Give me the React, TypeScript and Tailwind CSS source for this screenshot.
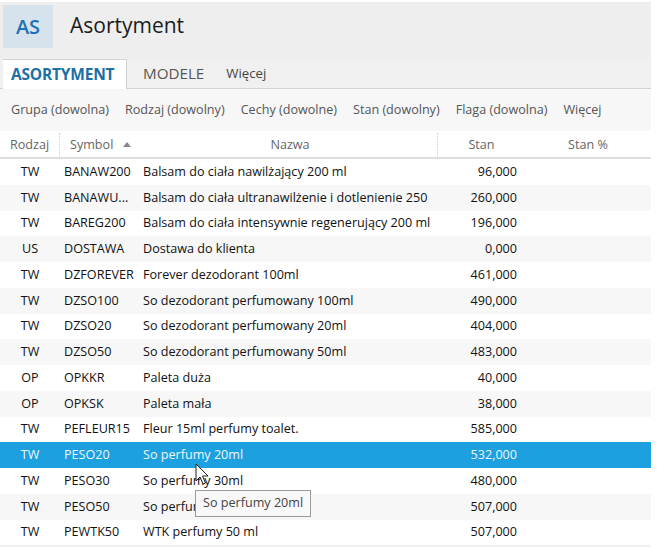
import React from "react";

type Row = { kind: string; symbol: string; name: string; stock: string };

const rows: Row[] = [
  { kind: "TW", symbol: "BANAW200", name: "Balsam do ciała nawilżający 200 ml", stock: "96,000" },
  { kind: "TW", symbol: "BANAWU...", name: "Balsam do ciała ultranawilżenie i dotlenienie 250", stock: "260,000" },
  { kind: "TW", symbol: "BAREG200", name: "Balsam do ciała intensywnie regenerujący 200 ml", stock: "196,000" },
  { kind: "US", symbol: "DOSTAWA", name: "Dostawa do klienta", stock: "0,000" },
  { kind: "TW", symbol: "DZFOREVER", name: "Forever dezodorant 100ml", stock: "461,000" },
  { kind: "TW", symbol: "DZSO100", name: "So dezodorant perfumowany 100ml", stock: "490,000" },
  { kind: "TW", symbol: "DZSO20", name: "So dezodorant perfumowany 20ml", stock: "404,000" },
  { kind: "TW", symbol: "DZSO50", name: "So dezodorant perfumowany 50ml", stock: "483,000" },
  { kind: "OP", symbol: "OPKKR", name: "Paleta duża", stock: "40,000" },
  { kind: "OP", symbol: "OPKSK", name: "Paleta mała", stock: "38,000" },
  { kind: "TW", symbol: "PEFLEUR15", name: "Fleur 15ml perfumy toalet.", stock: "585,000" },
  { kind: "TW", symbol: "PESO20", name: "So perfumy 20ml", stock: "532,000" },
  { kind: "TW", symbol: "PESO30", name: "So perfumy 30ml", stock: "480,000" },
  { kind: "TW", symbol: "PESO50", name: "So perfumy 50ml", stock: "507,000" },
  { kind: "TW", symbol: "PEWTK50", name: "WTK perfumy 50 ml", stock: "507,000" },
];

const filters = ["Grupa (dowolna)", "Rodzaj (dowolny)", "Cechy (dowolne)", "Stan (dowolny)", "Flaga (dowolna)", "Więcej"];

const SELECTED = 11;

function Cursor() {
  return (
    <svg width="16" height="24" viewBox="0 0 16 24" className="absolute left-[195px] top-[332px]">
      <path d="M1 1 L1 18 L5 14 L8 21 L10.5 20 L7.5 13 L13 13 Z" fill="#fff" stroke="#222" strokeWidth="1" strokeLinejoin="round" />
    </svg>
  );
}

export default function App() {
  return (
    <div className="h-[552px] w-[672px] overflow-hidden bg-white pt-[2px] text-[#222] font-['Open_Sans',sans-serif]">
      <div className="w-[651px]">
        <div className="flex h-[56px] items-start bg-[#eeeeee]">
          <div className="ml-[3px] mt-[3px] flex h-[43px] w-[50px] items-center justify-center bg-[#d7e3ec] text-[20px] font-semibold text-[#1d70b3]">
            AS
          </div>
          <div className="ml-[17px] mt-[8px] text-[21px] text-[#1b1b1b]">Asortyment</div>
        </div>

        <div className="flex h-[31px] items-end border-b border-[#d2d2d2] bg-[#f0f0f0]">
          <div className="-mb-px ml-[3px] flex h-[30px] w-[124px] items-center border-r border-t border-[#d2d2d2] bg-white pl-[8px] pt-[1px] text-[15.5px] font-bold tracking-[-0.2px] text-[#1d6fa5]">
            ASORTYMENT
          </div>
          <div className="flex h-[30px] items-center pl-[16px] pt-[1px] text-[15.2px] text-[#555]">MODELE</div>
          <div className="flex h-[30px] items-center pl-[22px] pt-[1px] text-[13.2px] text-[#444]">Więcej</div>
        </div>

        <div className="flex h-[42px] items-center gap-[16px] bg-[#f7f7f7] pl-[11px] text-[12.6px] text-[#555]">
          {filters.map((f) => (
            <span key={f}>{f}</span>
          ))}
        </div>

        <div className="relative">
          <div className="flex h-[28px] items-center border-b-2 border-[#dedede] pt-[2px] text-[12.6px] text-[#666]">
            <div className="flex h-full w-[60px] items-center justify-center border-r border-dotted border-[#cfcfcf]">Rodzaj</div>
            <div className="flex w-[83px] items-center pl-[10px]">
              Symbol
              <svg width="8" height="5" viewBox="0 0 8 5" className="ml-[10px]">
                <path d="M0 5 L4 0 L8 5 Z" fill="#888" />
              </svg>
            </div>
            <div className="flex h-full w-[295px] items-center justify-center border-r border-dotted border-[#cfcfcf]">Nazwa</div>
            <div className="w-[87px] text-center">Stan</div>
            <div className="flex-1 text-center">Stan %</div>
          </div>

          {rows.map((r, i) => {
            const selected = i === SELECTED;
            const bg = selected ? "bg-[#1ca0e0] text-[#eef7fc]" : i % 2 === 1 ? "bg-[#f7f7f7] text-[#111]" : "bg-white text-[#111]";
            return (
              <div key={r.symbol} className={`flex h-[25.75px] items-center pt-[1px] text-[12.6px] ${bg}`}>
                <div className="w-[60px] text-center">{r.kind}</div>
                <div className="w-[83px] whitespace-nowrap pl-[4px]">{r.symbol}</div>
                <div className="w-[295px] overflow-hidden whitespace-nowrap">{r.name}</div>
                <div className="w-[79px] text-right">{r.stock}</div>
                <div className="flex-1" />
              </div>
            );
          })}
          <div className="h-[2px] bg-[#f0f0f0]" />

          <Cursor />
          <div className="absolute left-[195px] top-[359px] flex h-[27px] items-center border border-[#9a9a9a] bg-[#f8f8f8] px-[7px] text-[12.6px] text-[#444]">
            So perfumy 20ml
          </div>
        </div>
      </div>
    </div>
  );
}
